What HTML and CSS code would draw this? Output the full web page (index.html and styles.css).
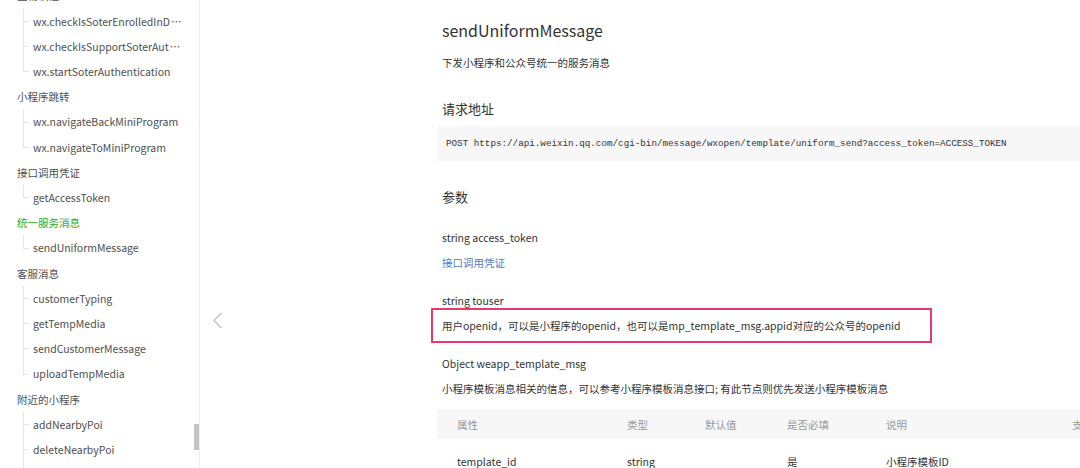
FILE: index.html
```html
<!DOCTYPE html>
<html lang="zh-CN">
<head>
    <meta charset="UTF-8">
    <meta name="viewport" content="width=device-width, initial-scale=1.0">
    <title>sendUniformMessage</title>
    <link rel="stylesheet" href="styles.css">
</head>
<body>
    <div class="page">
        <!-- Sidebar navigation -->
        <aside class="sidebar">
            <ul class="nav">
                <li class="nav-group">生物认证</li>
                <li class="nav-item">wx.checkIsSoterEnrolledInD<span class="more">…</span></li>
                <li class="nav-item">wx.checkIsSupportSoterAut<span class="more">…</span></li>
                <li class="nav-item last">wx.startSoterAuthentication</li>
                <li class="nav-group">小程序跳转</li>
                <li class="nav-item">wx.navigateBackMiniProgram</li>
                <li class="nav-item last">wx.navigateToMiniProgram</li>
                <li class="nav-group">接口调用凭证</li>
                <li class="nav-item last">getAccessToken</li>
                <li class="nav-group active">统一服务消息</li>
                <li class="nav-item last">sendUniformMessage</li>
                <li class="nav-group">客服消息</li>
                <li class="nav-item">customerTyping</li>
                <li class="nav-item">getTempMedia</li>
                <li class="nav-item">sendCustomerMessage</li>
                <li class="nav-item last">uploadTempMedia</li>
                <li class="nav-group">附近的小程序</li>
                <li class="nav-item">addNearbyPoi</li>
                <li class="nav-item">deleteNearbyPoi</li>
                <li class="nav-item">getNearbyPoiList</li>
            </ul>
            <div class="scroll-track"><div class="scroll-thumb"></div></div>
        </aside>

        <main class="main">
            <!-- Previous page arrow -->
            <div class="pager">
                <svg width="11" height="17" viewBox="0 0 11 17">
                    <polyline points="9.5,1 2,8.5 9.5,16" fill="none" stroke="#c2c2c2" stroke-width="1.4"/>
                </svg>
            </div>

            <article class="doc">
                <h1 class="title">sendUniformMessage</h1>
                <p class="summary">下发小程序和公众号统一的服务消息</p>

                <h2>请求地址</h2>
                <pre class="code">POST https://api.weixin.qq.com/cgi-bin/message/wxopen/template/uniform_send?access_token=ACCESS_TOKEN</pre>

                <h2>参数</h2>
                <div class="param first">
                    <p>string access_token</p>
                    <p class="link">接口调用凭证</p>
                </div>
                <div class="param">
                    <p>string touser</p>
                    <p class="highlight">用户openid，可以是小程序的openid，也可以是mp_template_msg.appid对应的公众号的openid</p>
                </div>
                <div class="param">
                    <p>Object weapp_template_msg</p>
                    <p>小程序模板消息相关的信息，可以参考小程序模板消息接口; 有此节点则优先发送小程序模板消息</p>
                </div>

                <table class="props">
                    <colgroup>
                        <col style="width: 170px">
                        <col style="width: 78px">
                        <col style="width: 82px">
                        <col style="width: 99px">
                        <col style="width: 186px">
                        <col style="width: 185px">
                    </colgroup>
                    <thead>
                        <tr>
                            <th>属性</th>
                            <th>类型</th>
                            <th>默认值</th>
                            <th>是否必填</th>
                            <th>说明</th>
                            <th>支持版本</th>
                        </tr>
                    </thead>
                    <tbody>
                        <tr>
                            <td>template_id</td>
                            <td>string</td>
                            <td></td>
                            <td>是</td>
                            <td>小程序模板ID</td>
                            <td></td>
                        </tr>
                    </tbody>
                </table>
            </article>
        </main>
    </div>
</body>
</html>
```

FILE: styles.css
```css
html, body {
    margin: 0;
    padding: 0;
    height: 100%;
    overflow: hidden;
}
body {
    font-family: "Noto Sans CJK SC", sans-serif;
    font-size: 10.5px;
    color: #333;
    background-color: #fff;
}
.page {
    display: flex;
    height: 468px;
}

/* sidebar */
.sidebar {
    width: 200px;
    flex-shrink: 0;
    display: flex;
    box-sizing: border-box;
    border-right: 1px solid #ededed;
    overflow: hidden;
}
.nav {
    flex: 1;
    min-width: 0;
    list-style: none;
    margin: -16.6px 0 0;
    padding: 0;
}
.nav li {
    line-height: 25.2px;
    white-space: nowrap;
    color: #4f4f4f;
}
.nav-group {
    padding-left: 17px;
}
.nav-group.active {
    color: #1aad19;
}
.nav-item {
    padding-left: 33px;
    background-image: linear-gradient(#e4e4e4, #e4e4e4), linear-gradient(#e4e4e4, #e4e4e4);
    background-repeat: no-repeat;
    background-size: 1px 100%, 6px 1px;
    background-position: 23px 0, 23px 50%;
}
.nav-item.last {
    background-size: 1px 50%, 6px 1px;
}
.more {
    margin-left: 1px;
}
.scroll-track {
    width: 5px;
    flex-shrink: 0;
}
.scroll-thumb {
    margin-top: 424px;
    height: 26px;
    background-color: #c4c4c4;
}

/* main */
.main {
    flex: 1;
    min-width: 0;
    display: flex;
    overflow: hidden;
}
.pager {
    width: 242px;
    flex-shrink: 0;
    box-sizing: border-box;
    padding: 312px 0 0 12px;
}
.doc {
    width: 760px;
    flex-shrink: 0;
}
.title {
    font-size: 16px;
    font-weight: normal;
    line-height: 24px;
    margin: 18px 0 0;
}
.summary {
    margin: 11px 0 0;
    line-height: 20px;
}
h2 {
    font-size: 13px;
    font-weight: normal;
    line-height: 20px;
    margin: 26px 0 0;
}
.code {
    margin: 7px 0 0 -5px;
    padding: 10px 9px;
    background-color: #f7f7f7;
    font-family: "Liberation Mono", monospace;
    font-size: 9.25px;
    line-height: 15px;
    color: #333;
}
.param {
    margin-top: 13px;
}
.param.first {
    margin-top: 18px;
}
.param p {
    margin: 0;
    line-height: 25px;
}
.param .link {
    color: #4d80c6;
}
.param .highlight {
    width: 501px;
    box-sizing: border-box;
    margin: -5px 0 -5px -11px;
    padding: 3px 9px;
    border: 2px solid #e6396d;
}
.props {
    margin: 8px 0 0 -5px;
    border-collapse: collapse;
    table-layout: fixed;
    width: 800px;
}
.props th {
    height: 30px;
    padding: 0 0 0 20px;
    background-color: #f7f7f7;
    color: #999;
    font-weight: normal;
    text-align: left;
}
.props td {
    height: 44px;
    padding: 0 0 0 20px;
    color: #333;
}
```
